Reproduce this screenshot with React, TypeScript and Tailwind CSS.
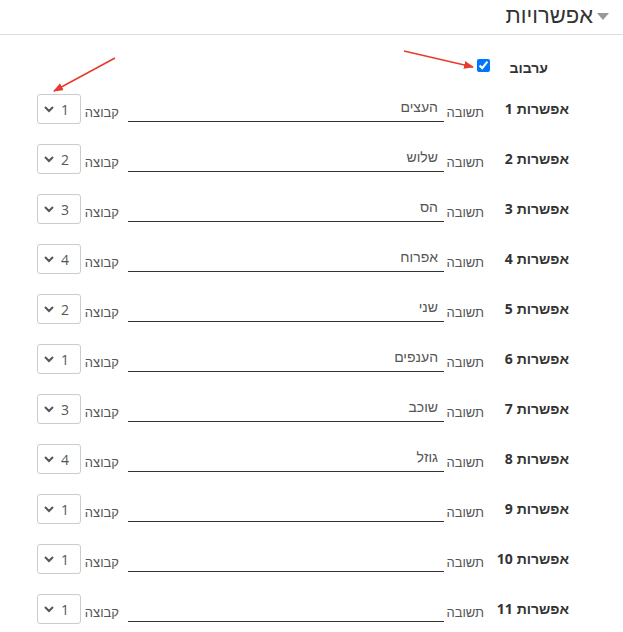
import React from "react";

const options = [
  { answer: "העצים", group: 1 },
  { answer: "שלוש", group: 2 },
  { answer: "הס", group: 3 },
  { answer: "אפרוח", group: 4 },
  { answer: "שני", group: 2 },
  { answer: "הענפים", group: 1 },
  { answer: "שוכב", group: 3 },
  { answer: "גוזל", group: 4 },
  { answer: "", group: 1 },
  { answer: "", group: 1 },
  { answer: "", group: 1 },
];

// digits render in Open Sans, Hebrew falls back to an Arial-like face
const num = "font-['Open_Sans',sans-serif]";

function GroupSelect({ value }: { value: number }) {
  return (
    <div className="flex h-[30px] w-[44px] flex-row-reverse items-center justify-between rounded-[3px] border border-[#ccc] bg-white pl-[5px] pr-[11px]">
      <svg width="12" height="8" viewBox="0 0 12 8">
        <path d="M2 2 L6 6 L10 2" fill="none" stroke="#555" strokeWidth="2" />
      </svg>
      <span className={`${num} text-[14px] text-[#555]`}>{value}</span>
    </div>
  );
}

function OptionRow({ index, answer, group }: { index: number; answer: string; group: number }) {
  return (
    <div className="flex h-[50px] items-center">
      <div className="w-[84px] text-[14px] font-bold text-[#333]">
        אפשרות <span className={num}>{index}</span>
      </div>
      <div className="mt-[7px] w-[41px] whitespace-nowrap pr-[1px] text-[13px] text-[#555]">תשובה</div>
      <div className="flex h-[26px] w-[316px] items-start border-b border-[#333] pr-[6px] text-[14px] text-[#555]">
        <span className="mt-[1px]">{answer}</span>
      </div>
      <div className="mr-[9px] mt-[7px] w-[34px] whitespace-nowrap text-[13px] text-[#555]">קבוצה</div>
      <div className="mr-[4px]">
        <GroupSelect value={group} />
      </div>
    </div>
  );
}

export default function App() {
  return (
    <div
      dir="rtl"
      className="relative h-[632px] w-[623px] overflow-hidden bg-white"
      style={{ fontFamily: '"Liberation Sans", Arial, sans-serif' }}
    >
      <div className="flex h-[35px] items-center border-b border-[#ddd] pb-[3px] pr-[14px]">
        <svg width="12" height="7" viewBox="0 0 12 7" className="ml-[4px] mt-[2px]">
          <path d="M0 0 L12 0 L6 7 Z" fill="#999" />
        </svg>
        <span className="text-[22px] leading-none text-[#333]">אפשרויות</span>
      </div>

      <div className="flex h-[49px] items-center pr-[75px] pt-[12px]">
        <div className="mt-[6px] w-[58px] text-[14px] font-bold text-[#333]">ערבוב</div>
        <input type="checkbox" checked readOnly className="m-0 h-[13px] w-[13px] accent-[#0075ff]" />
      </div>

      <div className="pr-[54px]">
        {options.map((o, i) => (
          <OptionRow key={i} index={i + 1} answer={o.answer} group={o.group} />
        ))}
      </div>

      <svg className="pointer-events-none absolute left-0 top-0" width="623" height="632">
        <defs>
          <marker id="ah" markerWidth="10" markerHeight="8" refX="9" refY="4" orient="auto" markerUnits="userSpaceOnUse">
            <path d="M0 0 L10 4 L0 8 Z" fill="#e8392a" />
          </marker>
        </defs>
        <line x1="115" y1="58" x2="54" y2="91" stroke="#e8392a" strokeWidth="1.5" markerEnd="url(#ah)" />
        <line x1="404" y1="51" x2="473" y2="67" stroke="#e8392a" strokeWidth="1.5" markerEnd="url(#ah)" />
      </svg>
    </div>
  );
}
